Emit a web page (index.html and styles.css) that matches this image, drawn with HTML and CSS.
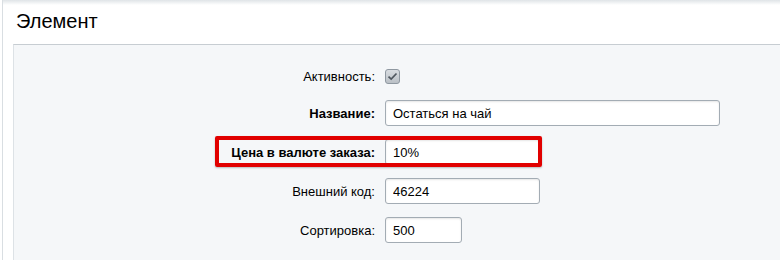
FILE: index.html
```html
<!DOCTYPE html>
<html lang="ru">
<head>
  <meta charset="UTF-8">
  <title>Элемент</title>
  <link rel="stylesheet" href="styles.css">
</head>
<body>
  <div class="page">
    <div class="topbar"></div>
    <h1 class="title">Элемент</h1>
    <div class="panel">
      <div class="row row-check">
        <label class="row-label">Активность:</label>
        <div class="row-field">
          <span class="checkbox">
            <svg width="15" height="15" viewBox="0 0 15 15">
              <defs>
                <linearGradient id="cbg" x1="0" y1="0" x2="0" y2="1">
                  <stop offset="0" stop-color="#dadee2"/>
                  <stop offset="1" stop-color="#b9bfc5"/>
                </linearGradient>
              </defs>
              <rect x="0.5" y="0.5" width="14" height="14" rx="2.5" fill="url(#cbg)" stroke="#8f98a1"/>
              <path d="M3.5 7.6 L6.2 10.1 L11.5 4.5" fill="none" stroke="#4f575f" stroke-width="1.7"/>
            </svg>
          </span>
        </div>
      </div>
      <div class="row">
        <label class="row-label bold">Название:</label>
        <div class="row-field"><input class="field w-long" type="text" value="Остаться на чай"></div>
      </div>
      <div class="row row-marked">
        <label class="row-label bold">Цена в валюте заказа:</label>
        <div class="row-field"><input class="field w-mid" type="text" value="10%"></div>
      </div>
      <div class="row">
        <label class="row-label">Внешний код:</label>
        <div class="row-field"><input class="field w-mid" type="text" value="46224"></div>
      </div>
      <div class="row">
        <label class="row-label">Сортировка:</label>
        <div class="row-field"><input class="field w-short" type="text" value="500"></div>
      </div>
    </div>
  </div>
</body>
</html>
```

FILE: styles.css
```css
body {
  margin: 0;
  background-color: #ffffff;
  font-family: "Liberation Sans", Arial, sans-serif;
  font-size: 13px;
  color: #000;
}

.page {
  margin-left: 2px;
  border-left: 1px solid #d9dee2;
  height: 260px;
  overflow: hidden;
}

.topbar {
  height: 5px;
  background: linear-gradient(#dfe4e7, #ffffff);
}

.title {
  margin: 0 0 11px 0;
  padding: 4px 0 0 13px;
  font-size: 20px;
  line-height: 24px;
  font-weight: normal;
  color: #000;
}

.panel {
  margin-left: 10px;
  border-top: 1px solid #c7cdd2;
  border-left: 1px solid #dde2e6;
  background-color: #f5f7f9;
  padding-top: 20px;
  height: 400px;
}

.row {
  display: grid;
  grid-template-columns: 361px 1fr;
  column-gap: 10px;
  align-items: center;
  height: 26px;
  margin-bottom: 13px;
}

.row-check {
  height: 22px;
}

.row-label {
  text-align: right;
}

.row-label.bold {
  font-weight: bold;
}

.row-field {
  display: flex;
  align-items: center;
}

.checkbox {
  display: block;
  width: 15px;
  height: 15px;
}

.checkbox svg {
  display: block;
}

.field {
  box-sizing: border-box;
  height: 26px;
  padding: 0 7px;
  border: 1px solid #a3acb4;
  border-radius: 3px;
  background-color: #fff;
  box-shadow: inset 0 1px 2px rgba(0, 0, 0, 0.1);
  font-family: "Liberation Sans", Arial, sans-serif;
  font-size: 13px;
  color: #000;
  outline: none;
}

.w-long { width: 335px; }
.w-mid { width: 155px; }
.w-short { width: 77px; }

/* красная рамка поверх строки с ценой */
.row-marked {
  position: relative;
}

.row-marked::after {
  content: "";
  position: absolute;
  left: 201px;
  top: -3px;
  width: 327px;
  height: 31px;
  box-sizing: border-box;
  border: 4px solid #e10000;
  border-radius: 2px;
  box-shadow: 0 1px 2px rgba(0, 0, 0, 0.25);
  pointer-events: none;
}
```
